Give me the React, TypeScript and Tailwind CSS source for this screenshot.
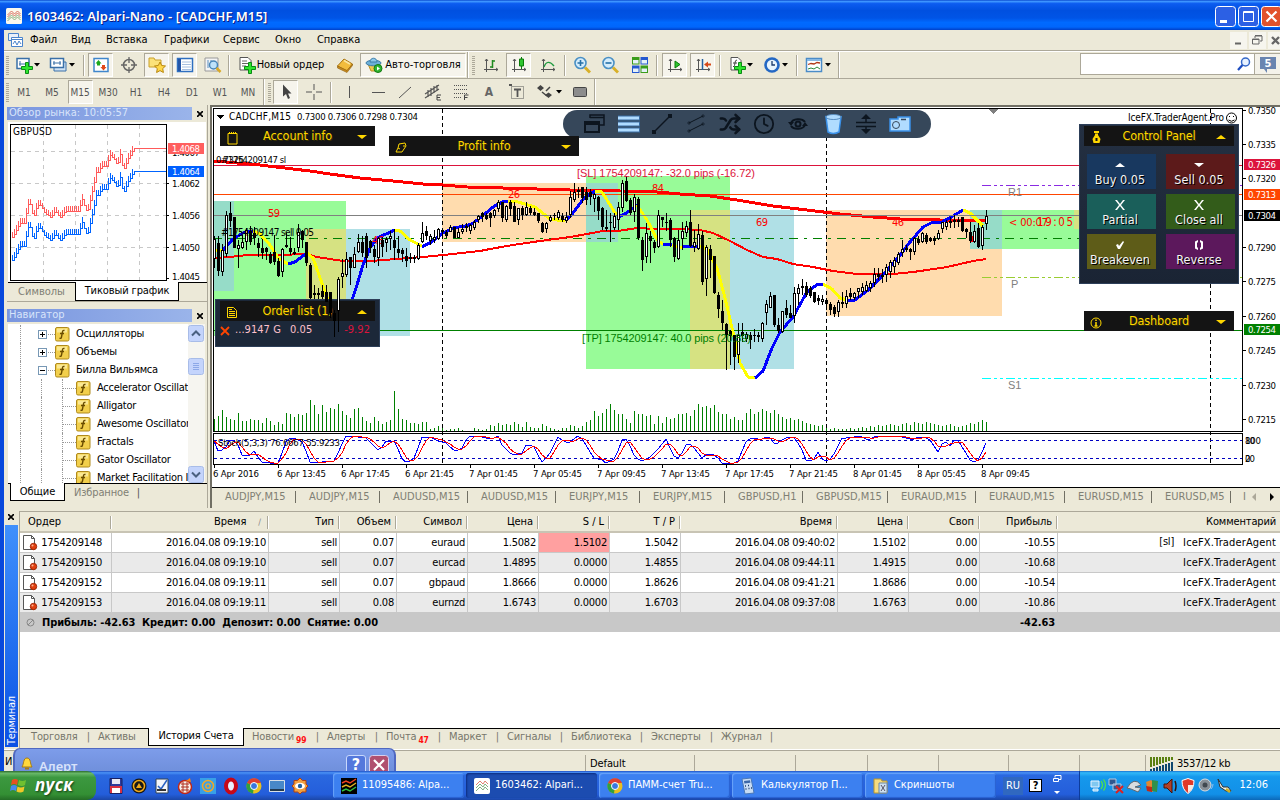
import React from 'react'
import { LuShuffle, LuClock } from 'react-icons/lu'

type Candle = [number, number, number, number, number]

// high, low, body top, body bottom (thirds of a pixel below the plot top), 1 = bullish
const candles: Candle[] = [
  [392, 490, 402, 462, 1], [392, 513, 415, 498, 0], [418, 513, 435, 502, 1], [317, 455, 331, 448, 1], [290, 365, 325, 347, 0],
  [335, 430, 337, 428, 0], [405, 490, 420, 433, 1], [390, 433, 412, 428, 1], [370, 435, 375, 412, 1], [363, 420, 378, 410, 0],
  [365, 420, 384, 400, 0], [400, 455, 413, 430, 0], [402, 462, 430, 445, 0], [425, 465, 430, 440, 0], [440, 478, 447, 475, 0],
  [390, 480, 440, 472, 0], [460, 517, 468, 512, 0], [430, 515, 432, 502, 1], [385, 430, 420, 425, 0], [395, 450, 430, 442, 0],
  [430, 450, 442, 448, 1], [358, 440, 382, 430, 1], [375, 428, 378, 405, 0], [410, 482, 412, 475, 0], [475, 600, 480, 580, 0],
  [540, 590, 565, 570, 1], [548, 590, 565, 570, 0], [540, 590, 558, 575, 0], [540, 590, 560, 590, 0], [560, 640, 560, 625, 0],
  [615, 695, 625, 648, 0], [515, 680, 523, 618, 1], [462, 548, 503, 515, 1], [440, 515, 462, 510, 1], [455, 540, 455, 488, 0],
  [425, 490, 448, 490, 1], [388, 445, 410, 442, 1], [392, 455, 412, 445, 0], [385, 490, 393, 460, 0], [405, 445, 407, 430, 0],
  [420, 475, 432, 455, 0], [395, 482, 400, 460, 1], [395, 455, 405, 425, 0], [395, 440, 402, 415, 1], [378, 435, 393, 402, 1],
  [372, 465, 405, 428, 0], [393, 460, 432, 445, 0], [430, 470, 434, 448, 0], [430, 485, 452, 468, 0], [445, 475, 455, 460, 1],
  [450, 475, 455, 462, 0], [415, 465, 420, 462, 1], [352, 415, 383, 412, 1], [362, 405, 378, 392, 0], [388, 420, 393, 408, 1],
  [375, 415, 395, 405, 1], [370, 405, 373, 402, 1], [372, 392, 375, 382, 0], [375, 400, 380, 392, 0], [360, 382, 365, 380, 1],
  [365, 400, 365, 400, 0], [370, 400, 382, 398, 1], [358, 388, 372, 382, 1], [355, 380, 362, 370, 1], [358, 387, 360, 378, 1],
  [345, 375, 350, 370, 1], [330, 355, 332, 345, 1], [322, 350, 325, 335, 0], [325, 345, 330, 342, 0], [320, 365, 325, 340, 0],
  [312, 340, 315, 332, 1], [285, 320, 290, 312, 1], [290, 352, 292, 340, 0], [300, 350, 303, 345, 1], [285, 333, 290, 312, 0],
  [290, 352, 303, 352, 0], [308, 360, 310, 345, 1], [302, 345, 310, 330, 0], [290, 332, 305, 330, 1], [302, 330, 310, 325, 0],
  [308, 332, 320, 330, 0], [325, 355, 325, 348, 0], [350, 385, 355, 380, 0], [350, 385, 353, 373, 1], [330, 350, 337, 347, 1],
  [325, 345, 329, 332, 0], [315, 345, 322, 338, 1], [325, 350, 333, 345, 0], [322, 355, 335, 348, 1], [257, 340, 275, 330, 1],
  [235, 290, 262, 285, 1], [245, 280, 255, 260, 0], [245, 295, 245, 278, 0], [245, 300, 262, 285, 0], [252, 300, 262, 275, 0],
  [265, 320, 268, 283, 1], [272, 345, 275, 318, 0], [307, 375, 310, 365, 0], [315, 378, 365, 373, 1], [325, 412, 350, 355, 0],
  [325, 375, 333, 370, 1], [290, 375, 305, 345, 1], [225, 320, 235, 310, 1], [212, 290, 228, 288, 0], [280, 330, 285, 325, 0],
  [268, 352, 277, 322, 1], [275, 405, 283, 400, 0], [395, 497, 405, 465, 0], [355, 475, 385, 455, 1], [378, 475, 393, 407, 0],
  [405, 445, 412, 428, 0], [315, 430, 330, 427, 1], [335, 365, 335, 345, 0], [325, 378, 350, 355, 0], [340, 425, 345, 405, 0],
  [395, 470, 400, 455, 0], [375, 465, 405, 462, 1], [350, 435, 378, 402, 1], [348, 395, 363, 385, 1], [315, 425, 350, 422, 0],
  [375, 440, 412, 425, 1], [358, 435, 388, 432, 1], [378, 540, 390, 530, 0], [420, 572, 427, 523, 1], [420, 520, 432, 465, 0],
  [452, 568, 453, 565, 0], [562, 640, 570, 613, 0], [585, 675, 617, 655, 0], [655, 795, 658, 690, 0], [675, 780, 678, 692, 0],
  [690, 795, 690, 757, 0], [655, 775, 690, 750, 1], [655, 710, 680, 692, 0], [680, 712, 688, 703, 1], [680, 732, 690, 705, 0],
  [672, 710, 690, 693, 0], [680, 712, 690, 695, 0], [652, 710, 655, 702, 1], [585, 660, 598, 625, 1], [560, 610, 573, 608, 1],
  [570, 665, 570, 660, 0], [640, 685, 660, 678, 0], [618, 685, 618, 680, 1], [585, 640, 610, 630, 0], [600, 640, 625, 640, 0],
  [545, 655, 563, 632, 1], [538, 600, 550, 568, 1], [522, 570, 542, 550, 0], [530, 575, 543, 570, 0], [542, 580, 550, 572, 0],
  [560, 595, 562, 590, 0], [570, 600, 578, 588, 0], [570, 600, 583, 590, 1], [582, 615, 585, 597, 0], [590, 630, 597, 615, 0],
  [600, 635, 605, 628, 0], [585, 635, 592, 620, 1], [560, 610, 590, 597, 1], [555, 608, 572, 598, 1], [548, 585, 565, 575, 0],
  [560, 585, 563, 578, 1], [548, 580, 550, 560, 1], [535, 570, 545, 560, 1], [528, 560, 540, 558, 1], [528, 560, 535, 550, 1],
  [490, 545, 507, 535, 1], [490, 525, 508, 515, 0], [492, 535, 510, 515, 1], [478, 530, 485, 510, 1], [465, 520, 470, 500, 1],
  [455, 505, 465, 487, 1], [440, 480, 448, 475, 1], [405, 455, 432, 445, 1], [420, 440, 428, 435, 0], [430, 465, 433, 442, 0],
  [395, 450, 400, 440, 1], [392, 420, 403, 415, 0], [380, 415, 385, 412, 1], [385, 418, 390, 410, 0], [395, 412, 400, 408, 0],
  [393, 420, 400, 407, 0], [375, 405, 385, 402, 1], [350, 385, 352, 373, 1], [345, 375, 350, 365, 1], [335, 370, 347, 355, 0],
  [330, 368, 345, 352, 1], [335, 365, 345, 352, 1], [335, 380, 337, 378, 0], [370, 398, 372, 382, 0], [350, 415, 380, 408, 0],
  [360, 415, 378, 410, 1], [355, 430, 370, 425, 0], [360, 435, 365, 422, 1], [315, 375, 332, 358, 1],
]

const volumes = [
  12, 15, 21, 14, 12, 11, 18, 10, 10, 12, 11, 11, 8, 13, 10, 6, 9, 7, 18, 17, 14, 17, 16, 18, 31, 26, 17, 26, 19, 23, 22, 27, 20, 16, 13,
  22, 23, 14, 10, 8, 14, 10, 7, 9, 11, 40, 22, 12, 11, 8, 8, 7, 9, 9, 2, 3, 5, 3, 1, 2, 2, 3, 1, 0, 0, 3, 2, 1, 2, 6, 5, 8, 6, 7, 6, 9, 7,
  4, 9, 4, 3, 3, 7, 5, 3, 2, 1, 3, 3, 6, 5, 3, 5, 9, 11, 20, 15, 18, 22, 27, 21, 17, 17, 12, 8, 20, 17, 17, 15, 16, 7, 15, 8, 14, 12, 13,
  17, 17, 18, 15, 21, 27, 24, 25, 23, 26, 19, 17, 17, 12, 14, 11, 11, 18, 22, 17, 19, 22, 20, 18, 21, 17, 14, 12, 13, 11, 12, 10, 8, 7, 6,
  5, 6, 3, 2, 3, 2, 2, 2, 3, 2, 3, 4, 3, 5, 4, 6, 5, 6, 7, 6, 5, 7, 8, 6, 9, 8, 7, 9, 8, 7, 6, 5, 6, 7, 5, 4, 5, 6, 8, 7, 9, 11, 9, 5,
]

const stochPoints: [number, number][] = [
  [214, 441], [219, 453], [226, 447], [231, 438], [238, 445], [242, 455], [250, 455], [254, 451], [262, 462], [278, 463], [286, 442],
  [291, 437], [303, 442], [310, 462], [334, 461], [346, 436], [365, 437], [379, 451], [386, 441], [395, 441], [403, 462], [413, 461],
  [422, 437], [431, 437], [439, 441], [446, 443], [455, 451], [462, 448], [468, 436], [480, 436], [491, 439], [498, 436], [503, 447],
  [513, 455], [522, 453], [527, 443], [534, 447], [542, 462], [549, 455], [558, 437], [565, 442], [570, 442], [579, 435], [584, 442],
  [594, 458], [601, 459], [606, 463], [615, 459], [623, 437], [627, 440], [635, 457], [642, 461], [651, 457], [666, 439], [673, 455],
  [679, 459], [687, 443], [692, 445], [703, 459], [708, 453], [715, 455], [722, 463], [737, 463], [745, 443], [752, 437], [760, 440],
  [768, 436], [776, 445], [784, 438], [792, 436], [800, 445], [806, 460], [812, 462], [818, 452], [824, 462], [832, 458], [842, 438],
  [860, 436], [868, 440], [876, 436], [900, 436], [912, 440], [920, 436], [930, 440], [938, 452], [944, 440], [950, 446], [956, 437],
  [964, 450], [972, 463], [978, 460], [986, 443],
]

function valueAt(points: [number, number][], x: number) {
  for (let i = 1; i < points.length; i++) {
    const [x0, y0] = points[i - 1]
    const [x1, y1] = points[i]
    if (x <= x1) return y0 + ((y1 - y0) * Math.max(0, x - x0)) / (x1 - x0)
  }
  return points[points.length - 1][1]
}

const stochK = candles.map((_, i) => valueAt(stochPoints, 214 + i * 4))
const stochD = stochK.map((v, i) => (v + stochK[Math.max(0, i - 1)] + stochK[Math.max(0, i - 2)]) / 3)
const toLine = (values: number[]) => values.map((v, i) => `${214 + i * 4},${Math.round(v)}`).join(' ')

const slowMa = '213,161 226,162 260,165 293,169 310,171 330,174 360,178 393,181 423,184 443,185 467,187 503,188 537,189 570,190 620,191 657,192 680,194 710,196 737,200 773,206 807,210 840,214 873,217 900,219 940,220 986,221'
const fastMa = '213,258 230,257 247,255 277,255 307,254 317,257 330,259 343,261 370,261 397,259 423,257 443,255 480,251 490,249 513,245 540,241 570,237 587,234 603,231 618,231 637,228 657,229 677,229 700,230 713,233 730,241 747,250 763,257 777,259 793,264 813,267 833,271 857,274 893,274 913,272 927,270 947,267 973,261 986,259'

const trend: [string, string][] = [
  ['#ffff00', '213,250 223,250'],
  ['#0000ff', '223,250 233,239 243,233 253,231'],
  ['#ffff00', '253,231 260,234 270,245 278,258 288,264'],
  ['#0000ff', '288,264 295,262 307,253'],
  ['#ffff00', '307,253 313,258 325,292 330,305'],
  ['#0000ff', '352,300 357,285 363,265 370,248 377,238 395,230'],
  ['#ffff00', '395,230 400,231 410,240 422,246'],
  ['#0000ff', '422,247 433,241 443,233 453,228 465,226 472,224 480,218 493,207 502,202 508,201'],
  ['#ffff00', '508,201 518,202 535,207 550,219 565,221'],
  ['#0000ff', '565,221 573,213 585,197 595,191'],
  ['#ffff00', '595,191 602,192 617,216'],
  ['#0000ff', '619,217 628,212 637,205'],
  ['#ffff00', '637,205 647,220 658,241 663,244'],
  ['#0000ff', '663,244 672,245'],
  ['#ffff00', '672,245 682,248'],
  ['#0000ff', '682,247 688,246 700,246'],
  ['#ffff00', '700,246 707,249 717,268 725,298 732,328 740,363 748,377 755,378'],
  ['#0000ff', '755,378 763,371 772,348 780,332 793,317 807,292 818,284 823,284'],
  ['#ffff00', '823,284 832,289 840,298 847,300'],
  ['#0000ff', '847,300 855,300 867,291 880,278 897,259 910,242 923,227 933,222 942,222 953,216 963,210'],
  ['#ffff00', '963,210 970,213 983,226'],
]

const zones: [number, number, number, number, string][] = [
  [213, 201, 133, 135, '#98fb98'],
  [213, 201, 21, 90, '#96dcc8'],
  [306, 229, 40, 106, '#d6e282'],
  [346, 229, 64, 107, '#b0e0e6'],
  [442, 183, 144, 59, '#ffdcae'],
  [586, 176, 144, 193, '#98fb98'],
  [586, 183, 32, 59, '#96dcc8'],
  [690, 210, 40, 159, '#d6e282'],
  [730, 210, 64, 159, '#b0e0e6'],
  [826, 210, 176, 106, '#ffdcae'],
  [970, 210, 32, 39, '#96dcc8'],
  [1002, 210, 80, 39, '#98fb98'],
  [1074, 210, 8, 19, '#d6e282'],
]

const tickTrend: [number, number][] = [
  [11, 236], [17, 225], [20, 220], [24, 220], [29, 196], [33, 215], [37, 202], [41, 202], [43, 208], [50, 214], [55, 208], [60, 214],
  [65, 208], [78, 208], [82, 196], [87, 210], [92, 188], [96, 169], [98, 169], [101, 163], [107, 163], [109, 151], [115, 157], [117, 163],
  [120, 151], [123, 168], [128, 155], [134, 145],
]
const tickLine = (shift: number) => {
  let d = `M11.5 ${236.5 + shift}`
  for (let x = 12; x <= 133; x += 2) {
    const y = Math.round(valueAt(tickTrend, x)) + shift + 0.5
    d += `H${x + 0.5}V${y - 3}V${y + 3}`
  }
  return d + `H134.5V${148.5 + shift}H166`
}

function Label({ x, y, w, fill = '#000', size = 9.5, children }: { x: number; y: number; w?: number; fill?: string; size?: number; children: string }) {
  return (
    <text x={x} y={y} textLength={w} fill={fill} fontSize={size} fontFamily="'DejaVu Sans Condensed', 'DejaVu Sans', sans-serif">
      {children}
    </text>
  )
}

function Bar({ c, i }: { c: Candle; i: number }) {
  const x = 214 + i * 4
  const [h, l, t, b] = c.map((v) => Math.round(105 + v / 3))
  return (
    <g>
      <rect x={x} y={h} width={1} height={l - h} fill="#000" />
      {c[4] ? (
        <rect x={x - 0.5} y={t + 0.5} width={2} height={Math.max(1, b - t - 1)} fill="#fff" stroke="#000" />
      ) : (
        <rect x={x - 1} y={t} width={3} height={Math.max(1, b - t)} fill="#000" />
      )}
    </g>
  )
}

const prices: [string, number, string?][] = [
  ['0.7350', 111], ['0.7335', 145], ['0.7320', 179], ['0.7290', 248], ['0.7275', 282], ['0.7260', 317], ['0.7245', 351], ['0.7230', 386],
  ['0.7215', 420], ['0.7326', 165, '#dc143c'], ['0.7313', 195, '#ff4500'], ['0.7304', 216, '#000'], ['0.7254', 330, '#008000'],
]
const times = ['6 Apr 2016', '6 Apr 13:45', '6 Apr 17:45', '6 Apr 21:45', '7 Apr 01:45', '7 Apr 05:45', '7 Apr 09:45', '7 Apr 13:45', '7 Apr 17:45', '7 Apr 21:45', '8 Apr 01:45', '8 Apr 05:45', '8 Apr 09:45']

function PriceChart() {
  return (
    <svg width={1068} height={380} viewBox="212 107 1068 380" className="block" shapeRendering="crispEdges">
      <rect x={212} y={107} width={1068} height={380} fill="#fff" />
      {zones.map(([x, y, w, h, c], i) => <rect key={i} x={x} y={y} width={w} height={h} fill={c} />)}
      <g fill="none" strokeLinejoin="round">
        <path d="M442.5 109V465M826.5 109V465M1210.5 109V465" stroke="#000" strokeDasharray="4 3" />
        <path d="M213 165.5H1242" stroke="#dc143c" />
        <path d="M213 194.5H1242" stroke="#ff4500" />
        <path d="M213 330.5H1242" stroke="#008000" />
        <path d="M213 238.5H1242" stroke="#008000" strokeDasharray="9 6 3 6" />
        <path d="M982 185.5H1242" stroke="#8a2be2" strokeDasharray="9 3 3 3 3 3" />
        <path d="M982 277.5H1242" stroke="#9acd32" strokeDasharray="9 3 3 3 3 3" />
        <path d="M982 378.5H1242" stroke="#00ffff" strokeDasharray="9 3 3 3 3 3" />
        <polyline points={slowMa} stroke="#ff0000" strokeWidth={3} />
        <polyline points={fastMa} stroke="#ff0000" strokeWidth={2} />
        {trend.map(([c, p], i) => <polyline key={i} points={p} stroke={c} strokeWidth={3} />)}
        <path d="M213 215.5H1242" stroke="#808080" />
      </g>
      <Label x={268} y={217} w={12} size={11} fill="#ff0000">59</Label>
      <Label x={372} y={244} w={12} size={11} fill="#ff0000">46</Label>
      <Label x={508} y={198} w={12} size={11} fill="#ff0000">26</Label>
      <Label x={652} y={192} w={12} size={11} fill="#ff0000">84</Label>
      <Label x={756} y={226} w={12} size={11} fill="#ff0000">69</Label>
      <Label x={892} y={226} w={12} size={11} fill="#ff0000">46</Label>
      <rect x={970} y={236} width={5} height={6} fill="#ff0000" />
      {candles.map((c, i) => <Bar key={i} c={c} i={i} />)}
      {volumes.slice(0, 194).map((v, i) => <rect key={i} x={214 + i * 4} y={431 - v} width={1} height={v} fill="#008000" />)}
      <Label x={229} y={120} w={62} size={10}>CADCHF,M15</Label>
      <Label x={297} y={120} w={121}>0.7300 0.7306 0.7298 0.7304</Label>
      <path d="M217 115h7l-3.500 4z" fill="#000" />
      <Label x={216} y={163} w={28}>0.7326</Label>
      <Label x={221} y={163} w={65}>#1754209147 sl</Label>
      <Label x={221} y={236} w={93} size={10}>#1754209147 sell 0.05</Label>
      <g fontFamily="'Liberation Sans'" fontSize={11}>
        <text x={577} y={177} textLength={178} fill="#dc143c">[SL] 1754209147: -32.0 pips (-16.72)</text>
        <text x={582} y={342} textLength={169} fill="#008000">[TP] 1754209147: 40.0 pips (20.89)</text>
        <text x={1008} y={196} fill="#808080">R1</text>
        <text x={1011} y={288} fill="#808080">P</text>
        <text x={1008} y={389} fill="#808080">S1</text>
      </g>
      <Label x={1009} y={226} w={39} size={11} fill="#ff0000">{'< 00:07'}</Label>
      <Label x={1037} y={226} w={36} size={11.5} fill="#ff0000">19:05</Label>
      <Label x={1128} y={121} w={96} size={10}>IceFX.TraderAgent.Pro</Label>
      <g shapeRendering="auto" fill="none" stroke="#000">
        <circle cx={1231.5} cy={118} r={5} />
        <path d="M1228.500 120q3 2.500 6 0M1229.500 116v1M1233.500 116v1" />
      </g>
      <path d="M988 109h11l-5.500 5z" fill="#808080" />
      <path d="M213.500 431.500V108.500H1242.500V431.500ZM213.500 433.500H1242.500V464.500H213.500Z" fill="none" stroke="#000" />
      <g fill="none">
        <path d="M214 440.500H1242M214 458.500H1242" stroke="#0000c0" strokeDasharray="3 3" />
        <polyline points={toLine(stochK)} stroke="#0000ff" />
        <polyline points={toLine(stochD)} stroke="#ff0000" />
      </g>
      <Label x={218} y={446} w={122}>Stoch(5,3,3) 76.6667 55.9233</Label>
      {prices.map(([p, y, bg]) => (
        <g key={p}>
          {bg ? <rect x={1244} y={y - 6} width={36} height={11} fill={bg} /> : <rect x={1243} y={y - 1} width={3} height={1} />}
          <Label x={1248} y={y + 3} w={28} fill={bg ? '#fff' : '#000'}>{p}</Label>
        </g>
      ))}
      <Label x={1245} y={444} w={16}>100</Label>
      <Label x={1245} y={444} w={10}>80</Label>
      <Label x={1245} y={462} w={10}>20</Label>
      <Label x={1245} y={462} w={5}>0</Label>
      {times.map((t, i) => (
        <g key={t}>
          <rect x={214 + i * 64} y={465} width={1} height={3} />
          <Label x={213 + i * 64} y={477} w={i ? 49 : 46}>{t}</Label>
        </g>
      ))}
    </svg>
  )
}

const Tri = ({ up }: { up?: boolean }) => (
  <svg width="10" height="4" viewBox="0 0 10 4"><path d={up ? 'M0 4h10L5 0z' : 'M0 0h10L5 4z'} fill="currentColor" /></svg>
)

function PanelHeader({ title, up, icon }: { title: string; up?: boolean; icon: React.ReactNode }) {
  return (
    <div className="h-[20px] bg-[#141414] flex items-center text-[#ffd700] px-[6px]">
      <span className="w-[12px] flex justify-center pt-[3px]">{icon}</span>
      <span className="flex-1 text-center text-[12.5px] tracking-[-0.1px] leading-[18px] pb-[1px] [text-shadow:1px_1px_#3a3200]">{title}</span>
      <span className="w-[12px] pt-px"><Tri up={up} /></span>
    </div>
  )
}

const actions = [
  { label: 'Buy 0.05', bg: 'bg-[#18385f]', d: 'M1 8h10L6 4z' },
  { label: 'Sell 0.05', bg: 'bg-[#5c1a1a]', d: 'M1 4h10L6 8z' },
  { label: 'Partial', bg: 'bg-[#1a5f5a]', d: 'M1 1l4 5-4 5h2l3-4 3 4h2l-4-5 4-5H9L6 5 3 1z' },
  { label: 'Close all', bg: 'bg-[#335c1a]', d: 'M1 1l4 5-4 5h2l3-4 3 4h2l-4-5 4-5H9L6 5 3 1z' },
  { label: 'Breakeven', bg: 'bg-[#5e5c18]', d: 'M2 6l2-1 1 2 4-5 1 1-4 7H4z' },
  { label: 'Reverse', bg: 'bg-[#5c185c]', d: 'M5 1L2 2.500v7L5 11V9L4 8V4l1-1zM7 1l3 1.500v7L7 11V9l1-1V4L7 3z' },
]

function ChartWindow() {
  return (
    <div className="relative w-[1068px] h-[380px] overflow-hidden">
      <PriceChart />
      <div className="absolute left-[351px] top-[3px] w-[368px] h-[28px] rounded-full bg-[#36475a]">
        <svg width="368" height="28" viewBox="563 110 368 28" fill="none" stroke="#0c151f" strokeWidth="1.500">
          <path d="M590 118v-3h14v10h-4M590 117.500h14" />
          <path d="M585 122h14v10h-14zM585 124h14" strokeWidth="2" />
          <path d="M618 118h22M618 124h22M618 130h22" stroke="#3a90e8" strokeWidth="5" opacity=".5" />
          <path d="M618 118h21M618 124h21M618 130h21" stroke="#b0dcff" strokeWidth="3" />
          <path d="M654 132l16-16" />
          <path d="M652 130h4v4h-4zM668 114h4v4h-4z" fill="#0c151f" strokeWidth="0" />
          <path d="M689 123l14-7M689 131l14-7" strokeWidth="1" />
          <path d="M688 122h2v2h-2zM702 115h2v2h-2zM688 130h2v2h-2zM702 123h2v2h-2z" strokeWidth=".6" />
          <path d="M826 117q7 4 15 0l-2 15q-6 3-11 0z" fill="#b0dcff" stroke="#3a90e8" />
          <ellipse cx="833.500" cy="117" rx="7.500" ry="2.500" fill="#b0dcff" stroke="#5b8fc0" strokeWidth="1" />
          <path d="M856 122.500h20M856 126.500h20M866 116v6M866 127v6" />
          <path d="M861 119l5-5 5 5zM861 129l5 5 5-5z" fill="#0c151f" strokeWidth="0" />
          <path d="M791 123a7.500 5 0 0 1 14-1M805 125a7.500 5 0 0 1-14 1" strokeWidth="2" />
          <path d="M788 122h6l-3 4zM808 126h-6l3-4z" fill="#0c151f" strokeWidth="0" />
          <circle cx="798" cy="124" r="2.500" strokeWidth="2" />
          <path d="M890 119h8v-2h12v14h-20z" fill="#b0dcff" stroke="#3a90e8" />
          <circle cx="896" cy="125" r="3.500" stroke="#36475a" strokeWidth="1" />
          <path d="M901 119.500h5" stroke="#36475a" />
          <LuShuffle x={719} y={113} size={22} strokeWidth={2.8} color="#0c151f" />
          <LuClock x={753} y={113} size={22} strokeWidth={2} color="#0c151f" />
        </svg>
      </div>
      <div className="absolute left-[8px] top-[19px] w-[155px]">
        <PanelHeader title="Account info" icon={<svg width="11" height="14" viewBox="0 0 11 14" fill="none" stroke="currentColor"><path d="M1 2.500h9v10.500H1zM2.500 1v2M4.500 1v2M6.500 1v2M8.500 1v2" /></svg>} />
      </div>
      <div className="absolute left-[177px] top-[29px] w-[190px]">
        <PanelHeader title="Profit info" icon={<svg width="12" height="12" viewBox="0 0 12 12" fill="none" stroke="currentColor"><path d="M4 2l6-1 1 3-4 6H1l2-4zM3 6l2 1M10 4H8" /></svg>} />
      </div>
      <div className="absolute left-[3px] top-[192px] w-[165px] h-[48px] bg-[#1c2839] border border-[#2c3e58] px-1 pt-px">
        <PanelHeader up title="Order list (1)" icon={<svg width="10" height="11" viewBox="0 0 10 11" fill="none" stroke="currentColor"><path d="M.5.500h6l3 3v7h-9zM2 4.500h6M2 6.500h6M2 8.500h6M2 2.500h3" /></svg>} />
        <div className="flex text-[11px] text-[#ffc0cb] leading-[18px] tracking-[0.05px]">
          <svg width="10" height="10" viewBox="0 0 10 10" className="mt-[5px]"><path d="M1 1l8 8M9 1L1 9" stroke="#ff4500" strokeWidth="1.800" /></svg>
          <span className="w-[60px] pl-[5px] whitespace-nowrap">...9147 G</span>
          <span>0.05</span>
          <span className="ml-auto pr-[5px] text-[#dc143c]">-9.92</span>
        </div>
      </div>
      <div className="absolute left-[867px] top-[17px] w-[160px] h-[160px] bg-gradient-to-b from-[#243042] to-[#1a2434] border border-[#2c3e58] px-1 pt-px">
        <PanelHeader up title="Control Panel" icon={<svg width="9" height="13" viewBox="0 0 9 13" fill="currentColor"><path d="M2 0h5v2H2zM3 2.500h3v1.500l2.500 4L7.500 12h-6l-1-4L3 4z" /><path d="M3.500 7h2v3h-2z" fill="#141414" /></svg>} />
        <div className="grid grid-cols-[69px_69px] gap-x-[10px] gap-y-[5px] pl-[3px] pt-[8px] text-[#f4f4f4]">
          {actions.map((a) => (
            <div key={a.label} className={`h-[35px] flex flex-col items-center pr-[3px] ${a.bg}`}>
              <svg width="12" height="12" viewBox="0 0 12 12" className="mt-[5px] shrink-0"><path d={a.d} fill="#fff" /></svg>
              <span className="text-[12.5px] leading-[17px] tracking-[0.05px] whitespace-nowrap [text-shadow:1px_1px_#000]">{a.label}</span>
            </div>
          ))}
        </div>
      </div>
      <div className="absolute left-[872px] top-[204px] w-[150px]">
        <PanelHeader title="Dashboard" icon={<svg width="12" height="12" viewBox="0 0 12 12" fill="none" stroke="currentColor"><circle cx="6" cy="6" r="5" /><path d="M6 2.500v1.500M6 5v4M4.500 9h3" strokeWidth="1.500" /></svg>} />
      </div>
      <svg width="1068" height="380" viewBox="212 107 1068 380" className="absolute left-0 top-0 pointer-events-none" shapeRendering="crispEdges">
        {candles.slice(28, 32).map((c, i) => <Bar key={i} c={c} i={i + 28} />)}
      </svg>
    </div>
  )
}

const S = ({ children, w = 18 }: { children: React.ReactNode; w?: number }) => (
  <svg width={w} height={18} viewBox={`0 0 ${w} 18`} fill="none" className="shrink-0">{children}</svg>
)
const Caret = () => <svg width="6" height="4" viewBox="0 0 6 4" className="shrink-0"><path d="M0 0h6L3 3.500z" fill="#000" /></svg>
const Grip = () => <div className="w-[3px] h-[19px] shrink-0 bg-[repeating-linear-gradient(#aca899_0_1px,transparent_1px_2px)]" />
const Sep = () => <div className="w-[2px] h-[21px] shrink-0 bg-[#aca899] border-r border-white" />
const Plus = () => <path d="M10.500 6.500h3v4h4v3h-4v4h-3v-4h-4v-3h4z" fill="#2ee62e" stroke="#0a8a14" />

function Tool({ className, on, children }: { className: string; on?: boolean; children?: React.ReactNode }) {
  return (
    <div className={`h-[24px] flex items-center justify-center shrink-0 ${className} ${on ? 'bg-[#f6f4ec] border border-l-[#aca899] border-t-[#aca899] border-r-white border-b-white' : ''}`}>
      {children}
    </div>
  )
}

const axes = <path d="M4.500 3v13M2 13.500h14M3 5l1.500-2L6 5M14 12l2 1.500-2 1.500" stroke="#555" />

function MainToolbar() {
  return (
    <div className="h-[27px] flex items-center pl-[2px] border-b border-[#aca899]">
      <Grip />
      <Tool className="w-[34px] gap-[1px] ml-px">
        <S><path d="M2 2.500h12v10H2z" fill="#fff" stroke="#3a70a8" strokeWidth="1.500" /><path d="M5 5v5M4 8h6" stroke="#3a70a8" /><Plus /></S><Caret />
      </Tool>
      <Tool className="w-[36px] gap-[2px]">
        <S><path d="M5 6h12v9H5z" fill="#cfe2f4" stroke="#3a70a8" /><path d="M1.500 2.500h13v9h-13z" fill="#fff" stroke="#3a70a8" strokeWidth="1.500" /><path d="M4 7h8M5 5v4M11 5v4" stroke="#3a70a8" /></S><Caret />
      </Tool>
      <div className="ml-[3px]"><Sep /></div>
      <Tool on className="w-[25px] ml-[3px]"><S><path d="M2 2.500h14v13H2z" fill="#fff" stroke="#3f86cc" strokeWidth="1.500" /><path d="M6.500 4l3 3.500H8v2H5v-2H3.500z" fill="#1da81d" /><path d="M11.500 14.500l-3-3.500H10V9h3v2h1.500z" fill="#e04818" /></S></Tool>
      <Tool className="w-[31px]"><S><circle cx="9" cy="9" r="5.500" stroke="#666" strokeWidth="1.500" /><path d="M9 1v6M9 11v6M1 9h6M11 9h6" stroke="#666" strokeWidth="1.300" /></S></Tool>
      <Tool on className="w-[25px]"><S><path d="M1 2h5l1 2h6v7H1z" fill="#fbe27a" stroke="#c9a02c" /><path d="M12 6l1.700 3.500 3.800.500-2.800 2.600.700 3.900-3.400-1.900-3.400 1.900.700-3.900L6.500 10l3.800-.500z" fill="#ffd84a" stroke="#b8860b" /></S></Tool>
      <Tool on className="w-[25px] ml-[3px]"><S><path d="M1.500 2.500h15v13h-15z" fill="#fff" stroke="#2f6fc0" strokeWidth="1.500" /><path d="M2 3h3v12H2z" fill="#2456a8" /><path d="M6 6h9M6 8.500h9M6 11h9M6 13.500h9" stroke="#a8c0e0" /></S></Tool>
      <Tool className="w-[31px]"><S><path d="M1 2h13v13H1z" fill="#f4f4f4" stroke="#999" /><path d="M4 4v8M7 4v8" stroke="#5b8fc0" /><circle cx="9.500" cy="9" r="4" fill="#bfe2fa" stroke="#4a86b8" strokeWidth="1.500" /><path d="M12.500 12l4 4" stroke="#d8a828" strokeWidth="2.500" /></S></Tool>
      <Sep />
      <Tool className="w-[96px] gap-[1px] text-[11px] ml-[3px] tracking-[-0.05px]">
        <S><path d="M2 1.500h8l3 3V14H2z" fill="#fff" stroke="#555" /><path d="M4 5h5M4 7.500h7M4 10h4" stroke="#666" /><Plus /></S>
        <span className="whitespace-nowrap text-[11px]">Новый ордер</span>
      </Tool>
      <Tool className="w-[24px] ml-[4px]"><S><path d="M1.500 10L8 3l8.500 5-5.500 7z" fill="#f2bc3c" stroke="#a87514" /><path d="M1.500 10v2l9.500 4.500 5.500-7V8L11 14.500z" fill="#c98a1c" stroke="#8f6210" strokeWidth=".6" /><path d="M8 4.500l6 3.500" stroke="#fbe6a0" strokeWidth="1.500" /></S></Tool>
      <Tool on className="w-[106px] ml-[3px] gap-[2px]">
        <S><path d="M3 8h12l-2 7H6z" fill="#f0c84c" stroke="#b8902a" /><ellipse cx="8.500" cy="7" rx="7.500" ry="2.800" fill="#6cb0d8" stroke="#3c7ca8" /><path d="M5 6c0-5 7-5 7 0z" fill="#8cc8ea" stroke="#3c7ca8" /><circle cx="13" cy="12.500" r="4" fill="#2fb52f" stroke="#157a15" /><path d="M12 10.500v4l3-2z" fill="#fff" /></S>
        <span className="whitespace-nowrap text-[11px]">Авто-торговля</span>
      </Tool>
      <div className="w-[2px] h-full bg-[#aca899] border-r border-white ml-px mr-[3px]" />
      <Grip />
      <Tool className="w-[31px]"><S>{axes}<path d="M10.500 4v8M8 11h2.500M10.500 5H13" stroke="#1f8a1f" strokeWidth="1.500" /></S></Tool>
      <Tool on className="w-[25px]"><S>{axes}<path d="M11.500 1v12" stroke="#0a7a0a" /><path d="M9.500 3h4v7h-4z" fill="#2fc52f" stroke="#0a7a0a" /></S></Tool>
      <Tool className="w-[33px]"><S>{axes}<path d="M5 11c2-6 6-6 10-1" stroke="#1f9a3f" strokeWidth="1.400" /></S></Tool>
      <Sep />
      <Tool className="w-[31px]"><S><circle cx="7.500" cy="7" r="5.500" fill="#d4ecfb" stroke="#4a90c4" strokeWidth="1.600" /><path d="M4.500 7h6M7.500 4v6" stroke="#2470a8" strokeWidth="1.600" /><path d="M12 11.500l5 5" stroke="#d8b028" strokeWidth="3" /></S></Tool>
      <Tool className="w-[26px]"><S><circle cx="7.500" cy="7" r="5.500" fill="#d4ecfb" stroke="#4a90c4" strokeWidth="1.600" /><path d="M4.500 7h6" stroke="#2470a8" strokeWidth="1.600" /><path d="M12 11.500l5 5" stroke="#d8b028" strokeWidth="3" /></S></Tool>
      <Tool className="w-[33px]"><S><path d="M1 1h7.500v7.500H1z" fill="#3a9c1c" /><path d="M9.500 1H17v7.500H9.500zM1 9.500h7.500V17H1z" fill="#2458d0" /><path d="M9.500 9.500H17V17H9.500z" fill="#3a9c1c" /><path d="M2 4h5.500v3.500H2zM10.500 4H16v3.500h-5.500zM2 12.500h5.500V16H2zM10.500 12.500H16V16h-5.500z" fill="#e4f0f8" /></S></Tool>
      <Sep />
      <Tool on className="w-[25px] ml-[4px]"><S>{axes}<path d="M9 5v7l5-3.500z" fill="#2fc52f" stroke="#0a7a0a" /></S></Tool>
      <Tool on className="w-[25px] ml-[3px] mr-[4px]"><S>{axes}<path d="M8.500 3v11" stroke="#2460a0" strokeWidth="1.500" /><path d="M10 8.500l4-3v2h3v2h-3v2z" fill="#d84818" /></S></Tool>
      <Sep />
      <Tool className="w-[38px] gap-[1px]"><S><path d="M3 1.500h7l3 3V14H3z" fill="#fff" stroke="#555" /><path d="M9 4q-2 0-2 3t-2 4M5 7h4" stroke="#444" /><Plus /></S><Caret /></Tool>
      <Tool className="w-[32px] gap-[1px]"><S><circle cx="9" cy="9" r="7.800" fill="#2468c4" /><circle cx="9" cy="9" r="5.200" fill="#e8f4fc" /><path d="M9 5v4h3" stroke="#1c3c6c" strokeWidth="1.300" /></S><Caret /></Tool>
      <div className="ml-[5px]"><Sep /></div>
      <Tool className="w-[40px] gap-[2px]"><S><path d="M1.500 2.500h15v13h-15z" fill="#fff" stroke="#4a8cc8" strokeWidth="1.500" /><path d="M2 3h14v2H2z" fill="#86b8e4" /><path d="M3 8.500l3-1 3 .5 3-1.500 3 .5" stroke="#b03818" strokeWidth="1.300" /><path d="M3 13l3-1 3 1 3-2 3 2" stroke="#2a8a3a" /></S><Caret /></Tool>
      <div className="w-[2px] h-full bg-[#aca899] border-r border-white" />
      <div className="ml-auto flex h-[22px] mb-[3px] w-[200px]">
        <div className="w-[175px] bg-white border border-[#aca899] flex items-center justify-end pr-[3px]">
          <svg width="14" height="14" viewBox="0 0 14 14" fill="none"><circle cx="8.500" cy="5" r="4" fill="#e8f2ff" stroke="#3468c8" strokeWidth="1.500" /><path d="M5.500 8l-4.500 5" stroke="#1c4cc0" strokeWidth="2.200" /></svg>
        </div>
        <div className="flex-1 bg-[#f4f2ea] border-y border-[#aca899] flex justify-center">
          <svg width="16" height="17" viewBox="0 0 16 17" className="mt-[3px]"><path d="M0 0h16v12H7v4l-3-4H0z" fill="#6a85b0" /><text x="4.500" y="10" fontSize="11" fontWeight="700" fill="#fff">5</text></svg>
        </div>
      </div>
    </div>
  )
}

const frames = ['M1', 'M5', 'M15', 'M30', 'H1', 'H4', 'D1', 'W1', 'MN']

function FrameToolbar() {
  return (
    <div className="h-[26px] flex items-center pl-[2px] text-[#555] text-[10px]">
      <Grip />
      <div className="w-px" />
      {frames.map((f) => <Tool key={f} on={f === 'M15'} className={f === 'M15' ? 'w-[25px] mx-[1.5px]' : 'w-[28px]'}>{f}</Tool>)}
      <div className="w-[2px] h-full bg-[#aca899] border-r border-white mr-[3px] ml-px" />
      <Grip />
      <Tool on className="w-[25px] ml-[2px]"><S><path d="M6 1.500v12l3-2.500 2 5 2-1-2-4.500h3.500z" fill="#444" /></S></Tool>
      <Tool className="w-[32px]"><S><path d="M9 1v6M9 11v6M1 9h6M11 9h6" stroke="#555" /></S></Tool>
      <Sep />
      <Tool className="w-[33px]"><S><path d="M9.500 3v12" stroke="#555" /></S></Tool>
      <Tool className="w-[26px]"><S><path d="M3 9.500h13" stroke="#555" /></S></Tool>
      <Tool className="w-[28px]"><S><path d="M3 15L15 4" stroke="#555" /></S></Tool>
      <Tool className="w-[28px]"><S><path d="M1 11L15 2M1 15L15 6M4 14V7M7 13V5M10 10V3M13 8V2" stroke="#555" strokeWidth="1.200" /><path d="M13 17v-5h4M13 14.500h3M13 17h4" stroke="#444" /></S></Tool>
      <Tool className="w-[28px]"><S><path d="M2 2.500h14M2 6.500h14M2 10.500h14M2 14.500h8" stroke="#555" strokeDasharray="1 1" /><path d="M12.500 17v-5h4M12.500 14.500h3" stroke="#444" /></S></Tool>
      <Tool className="w-[28px] text-[12px] font-bold text-[#666]">A</Tool>
      <Tool className="w-[28px]"><S><path d="M3.500 3.500h12v12h-12z" stroke="#555" strokeDasharray="1 1" /><path d="M6 6.500h7M9.500 6.500V14" stroke="#555" strokeWidth="1.800" /><path d="M1 1h3v2H1z" fill="#555" /></S></Tool>
      <Tool className="w-[36px] gap-[2px]"><S><path d="M1 5l3.500-3L8 5 4.500 8zM9 12l3.500-2.500L16 12l-3.500 3z" fill="#444" /><path d="M6 9l5 4M10 8l4-4" stroke="#444" strokeWidth="1.500" /></S><Caret /></Tool>
      <Tool className="w-[25px]"><S><rect x="2.500" y="4.500" width="13" height="9" rx="1" fill="#8c8c8c" stroke="#444" /></S></Tool>
      <div className="w-[2px] h-full bg-[#aca899] border-r border-white ml-[2px]" />
    </div>
  )
}

function PanelTitle({ children }: { children: React.ReactNode }) {
  return (
    <div className="flex h-[13px] items-center shrink-0">
      <div className="w-[185px] h-[13px] leading-[12px] pl-[2px] text-[#d8e4fa] text-[11px] tracking-[0.05px] bg-gradient-to-r from-[#7a96df] to-[#9ab4ea] whitespace-nowrap">{children}</div>
      <svg width="6" height="6" viewBox="0 0 6 6" className="ml-[5px]"><path d="M0 0l6 6M6 0L0 6" stroke="#000" strokeWidth="1.600" /></svg>
    </div>
  )
}

function TickChart() {
  return (
    <svg width={198} height={160} viewBox="8 122 198 160" className="block bg-white" shapeRendering="crispEdges">
      <path d="M43.500 125V280M75.500 125V280M107.500 125V280M139.500 125V280M11 151.500H166M11 183.500H166M11 215.500H166M11 247.500H166" stroke="#c8c8c8" strokeDasharray="4 4" />
      <path d="M10.500 124.500h156v156h-156z" fill="none" stroke="#000" />
      <Label x={13} y={135} w={39} size={10}>GBPUSD</Label>
      <path d={tickLine(0)} fill="none" stroke="#ff5a5a" />
      <path d={tickLine(23)} fill="none" stroke="#0064ff" />
      <Label x={172} y={156} w={28}>1.4067</Label>
      <rect x={168} y={143} width={36} height={11} fill="#ff5f5f" />
      <rect x={168} y={166} width={36} height={11} fill="#0060ff" />
      <Label x={172} y={152} w={28} fill="#fff">1.4068</Label>
      <Label x={172} y={175} w={28} fill="#fff">1.4064</Label>
      <Label x={172} y={187} w={28}>1.4062</Label>
      <Label x={172} y={219} w={28}>1.4056</Label>
      <Label x={172} y={251} w={28}>1.4050</Label>
      <Label x={172} y={280} w={28}>1.4045</Label>
      <path d="M167 183.500h2M167 215.500h2M167 247.500h2M167 278.500h2" stroke="#000" />
    </svg>
  )
}

const FIcon = () => (
  <svg width="15" height="15" viewBox="0 0 15 15" className="shrink-0">
    <rect x=".5" y=".5" width="13.500" height="13.500" rx="1.500" fill="#f2cf4c" stroke="#b08a1c" />
    <path d="M2 1.500h10v4H2z" fill="#fbe892" />
    <path d="M9.500 3.500c-2-.5-2 1-2.300 3L6.500 10c-.3 1.500-1 1.500-2 1.200M5 6.500h4" fill="none" stroke="#6a4c00" strokeWidth="1.400" />
  </svg>
)

const tree = [
  { t: 'Осцилляторы', d: 0, s: '+' }, { t: 'Объемы', d: 0, s: '+' }, { t: 'Билла Вильямса', d: 0, s: '-' },
  { t: 'Accelerator Oscillator', d: 1 }, { t: 'Alligator', d: 1 }, { t: 'Awesome Oscillator', d: 1 }, { t: 'Fractals', d: 1 },
  { t: 'Gator Oscillator', d: 1 }, { t: 'Market Facilitation Index', d: 1 },
]

const ScrollButton = ({ d, thin }: { d: string; thin?: boolean }) => (
  <svg width="16" height="17" viewBox="0 0 16 17" className="shrink-0"><rect x=".5" y=".5" width="15" height="16" rx="2" fill="#c4d4fc" stroke="#a8bce8" /><path d={d} fill="none" stroke={thin ? '#8ca8e8' : '#4a6080'} strokeWidth={thin ? 1 : 2} /></svg>
)

function LeftPane() {
  return (
    <div className="w-[204px] mr-[2px] shrink-0 pl-[3px] flex flex-col border-r border-[#aca899]">
      <div className="pt-[2px] h-[197px] flex flex-col border-b border-[#aca899]">
        <PanelTitle>Обзор рынка: 10:05:57</PanelTitle>
        <div className="mt-[2px] pl-px"><TickChart /></div>
        <div className="flex h-[19px] ml-px text-[11px] leading-[18px]">
          <div className="w-[67px] border-t border-black text-center text-[#808074]">Символы</div>
          <div className="w-[104px] bg-white border-r border-b border-l border-black text-center tracking-[-0.1px]">Тиковый график</div>
          <div className="flex-1 border-t border-black" />
        </div>
      </div>
      <div className="pt-[7px] flex flex-col">
        <PanelTitle>Навигатор</PanelTitle>
        <div className="mt-[2px] ml-px h-[159px] w-[197px] bg-white flex overflow-hidden">
          <div className="w-[180px] overflow-hidden pt-px">
            {tree.map((n) => (
              <div key={n.t} className="h-[18px] flex items-center whitespace-nowrap text-[11px] tracking-[-0.25px]">
                <div className="w-[13px] h-full border-r border-dotted border-[#999] shrink-0" />
                {n.d === 0 ? (
                  <>
                    <div className="w-[17px] shrink-0" />
                    <svg width="17" height="9" viewBox="0 0 17 9" className="shrink-0"><rect x=".5" y=".5" width="8" height="8" fill="#fff" stroke="#7898b5" /><path d={n.s === '+' ? 'M2 4.500h5M4.500 2v5' : 'M2 4.500h5'} stroke="#000" /><path d="M10 4.500h7" stroke="#999" strokeDasharray="1 1" /></svg>
                  </>
                ) : (
                  <>
                    <div className="w-[21px] h-full border-r border-dotted border-[#999] shrink-0" />
                    <div className="w-[21px] h-full border-r border-dotted border-[#999] shrink-0" />
                    <div className="w-[13px] border-t border-dotted border-[#999] shrink-0" />
                  </>
                )}
                <FIcon />
                <span className="pl-[6px]">{n.t}</span>
              </div>
            ))}
          </div>
          <div className="w-[17px] bg-[#f6f5f0] flex flex-col pt-px">
            <ScrollButton d="M4 10.500l4-4 4 4" />
            <div className="h-[16px]" />
            <ScrollButton thin d="M5 5.500h6M5 7.500h6M5 9.500h6M5 11.500h6" />
            <div className="flex-1" />
            <ScrollButton d="M4 6.500l4 4 4-4" />
          </div>
        </div>
        <div className="flex h-[18px] ml-px text-[11px] leading-[17px]">
          <div className="w-[2px] border-t border-black" />
          <div className="w-[55px] bg-white border-x border-b border-black text-center">Общие</div>
          <div className="flex-1 border-t border-black text-[#808074] pl-[9px] tracking-[-0.15px]">Избранное <span className="text-[#555] pl-[5px]">|</span></div>
        </div>
      </div>
    </div>
  )
}

const chartTabs = [
  ['AUDJPY,M15', 'w-[84px]'], ['AUDJPY,M15', 'w-[84px]'], ['AUDUSD,M15', 'w-[88px]'], ['AUDUSD,M15', 'w-[88px]'], ['EURJPY,M15', 'w-[84px]'],
  ['EURJPY,M15', 'w-[85px]'], ['GBPUSD,H1', 'w-[78px]'], ['GBPUSD,M15', 'w-[85px]'], ['EURAUD,M15', 'w-[88px]'], ['EURAUD,M15', 'w-[89px]'],
  ['EURUSD,M15', 'w-[87px]'], ['EURUSD,M5', 'w-[79px]'],
]

const columns: [string, string][] = [
  ['Ордер', 'w-[92px]'], ['Время', 'w-[157px]'], ['Тип', 'w-[71px]'], ['Объем', 'w-[57px]'], ['Символ', 'w-[71px]'], ['Цена', 'w-[71px]'],
  ['S / L', 'w-[71px]'], ['T / P', 'w-[71px]'], ['Время', 'w-[157px]'], ['Цена', 'w-[71px]'], ['Своп', 'w-[71px]'], ['Прибыль', 'w-[78px]'],
  ['Комментарий', 'w-[222px]'],
]
const orders = [
  ['1754209148', '2016.04.08 09:19:10', 'sell', '0.07', 'euraud', '1.5082', '1.5102', '1.5042', '2016.04.08 09:40:02', '1.5102', '0.00', '-10.55', 'IceFX.TraderAgent'],
  ['1754209150', '2016.04.08 09:19:10', 'sell', '0.07', 'eurcad', '1.4895', '0.0000', '1.4855', '2016.04.08 09:44:11', '1.4915', '0.00', '-10.68', 'IceFX.TraderAgent'],
  ['1754209152', '2016.04.08 09:19:11', 'sell', '0.07', 'gbpaud', '1.8666', '0.0000', '1.8626', '2016.04.08 09:41:21', '1.8686', '0.00', '-10.54', 'IceFX.TraderAgent'],
  ['1754209153', '2016.04.08 09:19:11', 'sell', '0.08', 'eurnzd', '1.6743', '0.0000', '1.6703', '2016.04.08 09:37:08', '1.6763', '0.00', '-10.86', 'IceFX.TraderAgent'],
]

const termTabs: [string, string, string?][] = [
  ['Новости', 'w-[75px]', '99'], ['Алерты', 'w-[59px]'], ['Почта', 'w-[63px]', '47'], ['Маркет', 'w-[58px]'], ['Сигналы', 'w-[64px]'],
  ['Библиотека', 'w-[80px]'], ['Эксперты', 'w-[70px]'], ['Журнал', 'w-[60px]'],
]

function Terminal() {
  return (
    <div className="h-[240px] flex shrink-0 pt-[3px] text-[11px]">
      <div className="w-[15px] h-[237px] pl-px flex flex-col shrink-0">
        <div className="h-[14px] flex items-center pl-[3px] pb-[2px] shrink-0"><svg width="6" height="6" viewBox="0 0 6 6"><path d="M0 0l6 6M6 0L0 6" stroke="#000" strokeWidth="1.600" /></svg></div>
        <div className="w-[13px] h-[222px] bg-gradient-to-b from-[#4090fc] to-[#0a50e4] text-white flex flex-col justify-end items-center overflow-hidden">
          <svg width="13" height="60" viewBox="0 0 13 60"><text transform="translate(10 58) rotate(-90)" fill="#fff" fontSize="11" textLength="49">Терминал</text></svg>
        </div>
      </div>
      <div className="flex-1 border-t border-l border-[#aca899] bg-white flex flex-col overflow-hidden">
        <div className="h-[21px] flex bg-[#ece9d8] border-b-2 border-[#c8c4b4] shrink-0">
          {columns.map(([c, w], i) => (
            <div key={i} className={`${w} shrink-0 flex items-center justify-end tracking-[-0.05px] pt-[2px]`}>
              <span className={i === 0 ? 'mr-auto pl-[8px]' : i === 12 ? 'pr-[4px] tracking-[-0.15px]' : 'pr-[4px]'}>
                {c}{i === 1 && <span className="pl-[12px] pr-[2px] text-[9px] text-[#888]">∕</span>}
              </span>
              {i < 12 && <span className="w-[2px] h-[13px] bg-[#aca899] border-r border-white" />}
            </div>
          ))}
        </div>
        {orders.map((row, r) => (
          <div key={r} className={`h-[20px] flex border-b border-[#c8c8c8] shrink-0 ${r % 2 ? 'bg-[#eaeaea]' : 'bg-white'}`}>
            {row.map((v, i) => (
              <div key={i} className={`${columns[i][1]} ${i < 12 ? 'border-r border-[#c8c8c8] tracking-[-0.22px] pr-[2px]' : 'pr-[4px] tracking-[0.15px]'} shrink-0 flex items-center justify-end whitespace-nowrap ${r === 0 && i === 6 ? 'bg-[#ffa0a0]' : ''}`}>
                {i === 0 && <svg width="15" height="17" viewBox="0 0 15 17" className="mr-auto ml-[3px]"><path d="M.5 1.500h8l3 3v11H.5z" fill="#fff" stroke="#555" /><path d="M8.500 1.500v3h3" fill="none" stroke="#555" /><circle cx="10.500" cy="12.500" r="3.200" fill="#e04010" stroke="#a02808" /><circle cx="9.500" cy="11.500" r="1" fill="#ffb090" /></svg>}
                {i === 12 && r === 0 && <span className="pr-[9px] tracking-[-0.2px]">[sl]</span>}
                <span className={i === 0 ? 'pr-[7px] pt-px' : 'pt-px'}>{v}</span>
              </div>
            ))}
          </div>
        ))}
        <div className="h-[19px] bg-[#c8c8c8] flex items-center font-bold shrink-0 tracking-[-0.08px]">
          <svg width="9" height="9" viewBox="0 0 9 9" className="ml-[6px] mr-[7px]"><circle cx="4.500" cy="4.500" r="3.500" fill="none" stroke="#888" /><path d="M2 7l5-5" stroke="#888" /></svg>
          <span className="w-[960px] whitespace-pre pt-px">Прибыль: -42.63  Кредит: 0.00  Депозит: 0.00  Снятие: 0.00</span>
          <span className="w-[53px] text-right pt-px">-42.63</span>
        </div>
        <div className="flex-1" />
        <div className="h-[20px] bg-[#ece9d8] flex text-[#77776c] leading-[16px] tracking-[-0.15px]">
          <div className="w-[70px] border-t border-black pl-[11px] flex justify-between shrink-0">Торговля<span>|</span></div>
          <div className="w-[58px] border-t border-black pl-[8px] shrink-0">Активы</div>
          <div className="w-[96px] h-[18px] bg-white border-x border-b border-black text-black text-center shrink-0">История Счета</div>
          <div className="flex-1 flex border-t border-black">
            {termTabs.map(([t, w, n]) => (
              <div key={t} className={`${w} flex justify-between pl-[8px]`}>
                <span>{t}{n && <b className="text-[#ff1010] text-[8.5px] pl-[2px] relative top-[3px]">{n}</b>}</span>
                <span>|</span>
              </div>
            ))}
          </div>
        </div>
      </div>
    </div>
  )
}

const tasks = [
  { t: '11095486: Alpa...', icon: <S><path d="M1 1h16v16H1z" fill="#000" /><path d="M2 6l4-2 4 2 6-4" stroke="#f04020" strokeWidth="1.500" /><path d="M2 10l4-2 4 2 6-4" stroke="#e0b020" strokeWidth="1.500" /><path d="M2 14l4-2 4 2 6-4" stroke="#30c040" strokeWidth="1.500" /></S> },
  { t: '1603462: Alpari...', on: true, icon: <S><rect x="1" y="1" width="16" height="16" rx="2" fill="#fff" /><path d="M3 8l4-4 3 3 2-3 3 3" stroke="#e08070" /><path d="M3 11l4-4 3 3 2-3 3 3M3 14l4-4 3 3 2-3 3 3" stroke="#80b080" /></S> },
  { t: 'ПАММ-счет Tru...', icon: <S><circle cx="9" cy="9" r="7.500" fill="#e8c020" /><path d="M9 9L2 6a7.500 7.500 0 0 1 14 0H9z" fill="#e04030" /><path d="M9 9L2 6a7.500 7.500 0 0 0 6 10.500z" fill="#30a040" /><circle cx="9" cy="9" r="3.500" fill="#3878e0" stroke="#fff" /></S> },
  { t: 'Калькулятор П...', icon: <S><path d="M3 2l9-1 3 15-9 1z" fill="#c8dcf4" stroke="#4a78b8" /><path d="M5 4l6-.7.4 2.400-6 .7z" fill="#3c68a8" /><path d="M6 9h1M9 8.500h1M6.500 12h1M9.500 11.500h1M12 11h1" stroke="#204070" strokeWidth="1.500" /></S> },
  { t: 'Скриншоты', icon: <S><path d="M2 2h7l1 2h5v12H2z" fill="#f6dc80" stroke="#b8962c" /><path d="M7 6h8v10H7z" fill="#cfe0f0" stroke="#6888a8" /><path d="M9 8l4 6M13 8l-4 6" stroke="#556" /></S> },
]

const quick = [
  <g key="q"><path d="M3 1.500h12v15H3z" fill="#2c3c9c" stroke="#182060" /><path d="M5 2h8v5H5z" fill="#e8e8f4" /><path d="M3 9h12v7H3z" fill="#d83040" /><path d="M5 11h8v5H5z" fill="#fff" /></g>,
  <g key="q"><circle cx="9" cy="9" r="7.500" fill="#181818" /><circle cx="9" cy="9" r="5.500" stroke="#f0a818" strokeWidth="1.500" /><path d="M9 6l3 5H6z" fill="#f0a818" /></g>,
  <g key="q"><path d="M3 2h12v14H3z" fill="#f4f6fa" stroke="#345" /><path d="M5 9l3 3 6-9" stroke="#2860c0" strokeWidth="1.500" /><path d="M4 13h9" stroke="#333" strokeWidth="2" /></g>,
  <g key="q"><circle cx="9" cy="10" r="6.500" fill="#f8f0e8" stroke="#c02818" strokeWidth="1.500" /><path d="M5 7h8M5 10h8M5 13h8M7 5v10M11 5v10" stroke="#b03020" /><path d="M10 4l4-3 1 4z" fill="#f08020" /></g>,
  <g key="q"><path d="M1 1h16v16H1z" fill="#38a0e8" /><circle cx="9" cy="9" r="5.500" stroke="#f0a828" strokeWidth="1.500" /><circle cx="9" cy="9" r="2.200" stroke="#f0a828" strokeWidth="1.300" /></g>,
  <g key="q"><ellipse cx="9" cy="9" rx="5" ry="6.500" fill="#e8f0ff" stroke="#c80818" strokeWidth="4" /></g>,
  <g key="q"><circle cx="9" cy="9" r="7.500" fill="#e8c020" /><path d="M9 9L2 6a7.500 7.500 0 0 1 14 0H9z" fill="#e04030" /><path d="M9 9L2 6a7.500 7.500 0 0 0 6 10.500z" fill="#30a040" /><circle cx="9" cy="9" r="3.500" fill="#3878e0" stroke="#fff" /></g>,
  <g key="q"><path d="M1.500 3.500h15v11h-15z" fill="#4888c8" stroke="#d8e0e8" /><path d="M2 12h14v2H2z" fill="#203850" /></g>,
  <g key="q"><path d="M9 1l2.500 2.500H15V7l2 2-2 2v4h-4L9 17l-2.500-2H3v-4L1 9l2-2V3.500h3.500z" fill="#f0a040" stroke="#b04010" /><ellipse cx="9" cy="9" rx="5" ry="3.200" fill="#fff" /><circle cx="9" cy="9" r="2.200" fill="#2060a0" /></g>,
]

const tray = [
  <g key="t"><path d="M2 4h8v6H2zM4 12h5v2H4z" fill="#80c8f0" stroke="#e8f4ff" /><path d="M12 4q3 4 0 8M14.500 2.500q4 5.500 0 11" stroke="#50e050" strokeWidth="1.300" /></g>,
  <g key="t"><path d="M2 2h7v6H2zM6 7h8v6H6z" fill="#305890" stroke="#b8c8e0" /><path d="M9 9l7 7M16 9l-7 7" stroke="#e02020" strokeWidth="2" /></g>,
  <g key="t"><path d="M2 11Q9-1 16 8l-6 2 6 1-3 4-7-3z" fill="#d8dce0" stroke="#606870" /></g>,
  <g key="t"><path d="M3 5l5-2 2 2v10l-5-1z" fill="#e08830" /><path d="M9 3l6 1-1 11-5-1z" fill="#30904a" /><path d="M3 9l6 1v5l-5-1z" fill="#c02818" /></g>,
  <g key="t"><path d="M3 7h3l5-5v14l-5-5H3z" fill="#b04028" stroke="#481008" /><path d="M14 4q2 5 0 10" stroke="#301008" strokeWidth="1.500" /></g>,
  <g key="t"><path d="M9 1.500l6 2q0 9-6 13-6-4-6-13z" fill="#e03828" stroke="#fff" /><path d="M9 2v14q5-4 5.500-8H9z" fill="#f8e8e0" /></g>,
  <g key="t"><circle cx="8" cy="8" r="6" fill="#889098" stroke="#d8dce0" /><circle cx="8" cy="8" r="2.500" fill="#404850" /><path d="M14 12q2-2 2-5" stroke="#90c0f0" /></g>,
  <g key="t"><path d="M3 2l2 8 6 4h5l-3-4-5 0z" fill="#f0f0e8" stroke="#303030" /><path d="M11 12l4 3" stroke="#d0b020" strokeWidth="2.500" /></g>,
]

function Taskbar() {
  return (
    <div className="h-[29px] w-full flex shrink-0 text-white text-[11px] bg-[linear-gradient(#1f4fc4_0%,#4a92f6_6%,#2a68e0_14%,#245edb_80%,#1b47a8_100%)]">
      <div className="w-[96px] rounded-r-[9px] bg-[linear-gradient(#2c6a2c_0%,#68b868_8%,#3c9840_22%,#349034_80%,#246c26_100%)] flex items-center shrink-0">
        <svg width="20" height="18" viewBox="0 0 20 18" className="ml-[9px]"><path d="M3 3q3-2 6 0L8 8Q5 6 2 8z" fill="#e85020" /><path d="M10 3q3 2 7 0l-1 5q-3 2-7 0z" fill="#70c030" /><path d="M2 9q3-2 6 0l-1 5q-3-2-6 0z" fill="#4888f0" /><path d="M8.500 9.500q3 2 7 0l-1 5q-3 2-7 0z" fill="#f0c828" /></svg>
        <span className="ml-[6px] mt-[-1px] text-[17px] font-bold italic leading-[20px] tracking-[0.3px] [text-shadow:1px_1px_2px_#143c14] font-['Open_Sans','Noto_Sans',sans-serif]">пуск</span>
      </div>
      <div className="w-[237px] flex items-center pl-[11px] gap-[5px] shrink-0">
        {quick.map((q, i) => <S key={i}>{q}</S>)}
      </div>
      <div className="flex gap-[2px] items-center shrink-0">
        {tasks.map((t) => (
          <div key={t.t} className={`w-[131px] h-[25px] rounded-[3px] flex items-center pl-[7px] gap-[4px] whitespace-nowrap tracking-[-0.05px] ${t.on ? 'bg-[#1c4cb0] shadow-[inset_1px_1px_2px_#0c2c80]' : 'bg-[#3c80f0] shadow-[inset_1px_1px_1px_#6aa4fa,inset_-1px_-1px_1px_#2860d0]'}`}>
            {t.icon}<span>{t.t}</span>
          </div>
        ))}
      </div>
      <div className="flex items-center flex-1">
        <span className="ml-[7px] w-[20px] h-[18px] leading-[18px] text-center bg-[#3068c0]">RU</span>
        <span className="ml-[6px] w-[13px] h-[13px] border border-black bg-white text-black font-bold text-center leading-[11px]">?</span>
        <svg width="10" height="22" viewBox="0 0 10 22" fill="none" stroke="#fff" className="ml-[10px] mb-[2px]"><path d="M3 3.500V1.500h6v4H7M1.500 4.500h5v3h-5z" /><path d="M2 17h6l-3 3z" fill="#fff" stroke="none" /></svg>
      </div>
      <div className="w-[201px] shrink-0 border-l border-[#0c3c9c] bg-[linear-gradient(#1870d0_0%,#30b8f8_6%,#1598ec_20%,#1290e8_80%,#0c68b8_100%)] flex items-center pl-[9px]">
        {tray.map((t, i) => <S key={i}>{t}</S>)}
        <span className="ml-auto pr-[12px]">12:06</span>
      </div>
    </div>
  )
}

const menu = [
  ['Файл', 'w-[41px]'], ['Вид', 'w-[35px]'], ['Вставка', 'w-[58px]'], ['Графики', 'w-[59px]'], ['Сервис', 'w-[52px]'], ['Окно', 'w-[42px]'], ['Справка', 'w-[60px]'],
]

function App() {
  return (
    <div className="relative w-[1280px] h-[800px] overflow-hidden flex flex-col bg-[#ece9d8] text-black font-['DejaVu_Sans_Condensed','DejaVu_Sans',sans-serif]">
      <div className="h-[30px] shrink-0 flex items-center bg-[linear-gradient(#0c4cd0_0%,#3c94ff_5%,#0c5cf0_12%,#0050e0_35%,#0054e6_60%,#006aff_75%,#0066fc_90%,#0040c8_100%)]">
        <svg width="16" height="16" viewBox="0 0 16 16" className="ml-[6px] mt-[2px]"><rect width="16" height="16" rx="1.500" fill="#fbf8ee" /><path d="M1.500 7l4-4 3 3 3-3 3 3M1.500 9l4-4 3 3 3-3 3 3" fill="none" stroke="#d87060" /><path d="M1.500 11l4-4 3 3 3-3 3 3M1.500 13l4-4 3 3 3-3 3 3" fill="none" stroke="#8ab080" /></svg>
        <span className="ml-[5px] mt-[4px] text-white font-semibold text-[13px] tracking-[0.13px] whitespace-nowrap [text-shadow:1px_1px_#0a1883] font-['Noto_Sans','Open_Sans',sans-serif]">1603462: Alpari-Nano - [CADCHF,M15]</span>
        <div className="ml-auto flex gap-[2px] w-[65px] mt-[2px]">
          <svg width="21" height="21" viewBox="0 0 21 21" className="shrink-0"><rect x=".5" y=".5" width="20" height="20" rx="3" fill="#2c60e4" stroke="#fff" /><path d="M5 14h7v3H5z" fill="#fff" /></svg>
          <svg width="21" height="21" viewBox="0 0 21 21" className="shrink-0"><rect x=".5" y=".5" width="20" height="20" rx="3" fill="#2c60e4" stroke="#fff" /><path d="M5.500 5.500h10v10h-10zM5 6.500h11" fill="none" stroke="#fff" /></svg>
          <svg width="21" height="21" viewBox="0 0 21 21" className="shrink-0"><rect x=".5" y=".5" width="20" height="20" rx="3" fill="#e2522c" stroke="#fff" /><path d="M5.500 5.500l10 10M15.500 5.500l-10 10" stroke="#fff" strokeWidth="2.200" /></svg>
        </div>
      </div>
      <div className="flex-1 min-h-0 flex flex-col border-l-4 border-[#0848dc]">
        <div className="h-[21px] shrink-0 flex items-center border-b border-[#aca899] text-[11px]">
          <svg width="16" height="16" viewBox="0 0 16 16" className="ml-[4px] mr-[6px] mb-px" fill="none" stroke="#4a84cc"><path d="M.5 1.500h10v7H.5z" fill="#e8f0fa" /><path d="M3.500 5.500h11v9h-11z" fill="#fff" /><path d="M4 7.500h10M5 12l2-3 2 4 2-4 2 3" /></svg>
          {menu.map(([m, w]) => <span key={m} className={`${w} tracking-[-0.05px] pt-px`}>{m}</span>)}
          <div className="ml-auto w-[50px] flex gap-[2px] text-[#555]">
            <svg width="17" height="17" viewBox="0 0 17 17" className="shrink-0 bg-[#f6f5ee]"><path d="M5 11.500h6" stroke="#666" strokeWidth="2" /></svg>
            <svg width="17" height="17" viewBox="0 0 17 17" className="shrink-0 bg-[#f6f5ee]" fill="none" stroke="#666"><path d="M6 6V4h7v5h-2M6 3.500h7" /><path d="M3.500 7h6.500v5H3.500zM3.500 7.500h6.500" /></svg>
            <svg width="17" height="17" viewBox="0 0 17 17" className="shrink-0 bg-[#f6f5ee]"><path d="M4 5l7 7M11 5l-7 7" stroke="#666" strokeWidth="2.400" /></svg>
          </div>
        </div>
        <div className="h-[54px] shrink-0 border-t border-white">
          <MainToolbar />
          <FrameToolbar />
        </div>
        <div className="h-[403px] shrink-0 flex">
          <LeftPane />
          <div className="flex-1 border-l-2 border-t-2 border-[#716f64] overflow-hidden">
            <ChartWindow />
            <div className="h-[21px] bg-[#ece9d8] border-t border-black flex items-center text-[#808074] text-[11px] pb-[2px]">
              {chartTabs.map(([t, w], i) => (
                <span key={i} className={`${w} shrink-0 flex justify-between items-center pl-[13px]`}>{t}<i className="w-px h-[12px] bg-[#716f64]" /></span>
              ))}
              <span className="pl-[12px]">I</span>
              <svg width="26" height="8" viewBox="0 0 26 8" className="ml-auto mr-[3px]"><path d="M5 0v8L1 4z" fill="#aca899" /><path d="M19 0v8l4-4z" fill="#000" /></svg>
            </div>
          </div>
        </div>
        <Terminal />
        <div className="h-px bg-white mt-[1px] shrink-0" />
        <div className="flex-1 flex items-center border-t border-[#aca899] text-[11px] tracking-[-0.1px] pt-[3px]">
          <span className="w-[581px] pl-px">И</span>
          {['w-[109px]', 'w-[101px]', 'w-[72px]', 'w-[71px]', 'w-[70px]', 'w-[71px]', 'w-[66px]'].map((w, i) => (
            <span key={i} className={`${w} h-[16px] border-l border-[#aca899] pl-[4px] pt-px leading-[15px]`}>{i === 0 && 'Default'}</span>
          ))}
          <span className="border-l border-[#aca899] h-[16px] flex items-center pl-[4px] gap-[3px] pt-[3px] tracking-[-0.3px]">
            <svg width="24" height="14" viewBox="0 0 24 14"><path d="M1 0v10M4 0v9M7 0v8M10 0v7M13 0v6M16 0v5M19 0v4M22 0v3" stroke="#5a8010" strokeWidth="2" /><path d="M1 12v2M4 11v3M7 10v4M10 9v5M13 8v6M16 7v7M19 6v8M22 5v9" stroke="#104870" strokeWidth="2" /></svg>
            3537/12 kb
          </span>
        </div>
      </div>
      <div className="absolute left-[13px] top-[748px] w-[383px] h-[23px] rounded-t-[7px] bg-gradient-to-b from-[#7d9cea] to-[#7090dc] border-x-2 border-t border-[#5068c0] flex items-start overflow-hidden">
        <svg width="12" height="14" viewBox="0 0 12 14" className="ml-[6px] mt-[8px]"><path d="M6 1c4 0 3 6 5 9H1c2-3 1-9 5-9z" fill="#ffd83c" stroke="#a87c10" /><path d="M4 11.500h4" stroke="#a87c10" strokeWidth="2" /></svg>
        <span className="ml-[6px] mt-[7px] text-[13px] font-semibold text-[#d8e2fa] leading-[20px] font-['Noto_Sans',sans-serif]">Алерт</span>
        <span className="ml-auto mt-[6px] w-[20px] h-[20px] rounded-[3px] border border-[#c8d8fc] bg-[#5478dc] text-white text-[16px] leading-[17px] text-center font-bold">?</span>
        <svg width="20" height="20" viewBox="0 0 20 20" className="ml-[3px] mr-[5px] mt-[6px]"><rect x=".5" y=".5" width="19" height="19" rx="3" fill="#b05070" stroke="#d8d0ec" /><path d="M5 5l10 10M15 5L5 15" stroke="#fff" strokeWidth="2.200" /></svg>
      </div>
      <Taskbar />
    </div>
  )
}

export default App
